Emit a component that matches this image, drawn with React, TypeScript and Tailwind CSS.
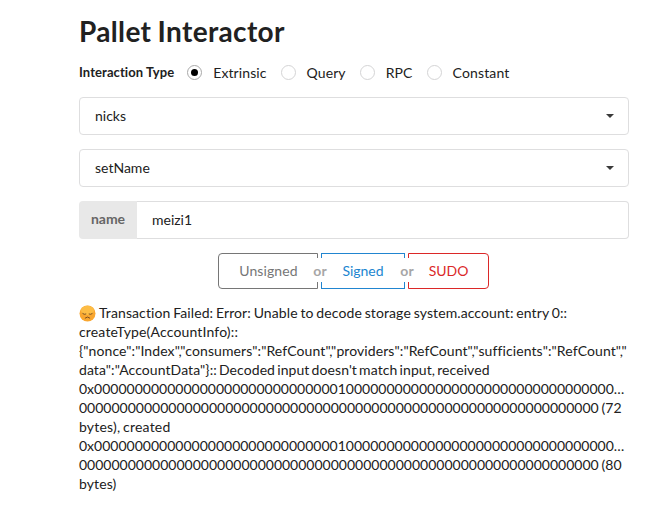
import React, { useState } from 'react';

const Z = (n: number) => '0'.repeat(n);

const MODES = [
  { label: 'Extrinsic', gap: 'mr-[14px]', tracking: 'tracking-[0.1px]' },
  { label: 'Query', gap: 'mr-[14px]', tracking: 'tracking-[0.1px]' },
  { label: 'RPC', gap: 'mr-[14px]', tracking: 'tracking-[0.1px]' },
  { label: 'Constant', gap: '', tracking: 'tracking-[0.15px]' },
];

type RadioProps = { label: string; gap: string; tracking: string; checked: boolean; onSelect: () => void };

function Radio({ label, gap, tracking, checked, onSelect }: RadioProps) {
  return (
    <button type="button" role="radio" aria-checked={checked} onClick={onSelect} className={`flex items-center ${gap}`}>
      <span
        className={`flex h-[15px] w-[15px] items-center justify-center rounded-full border ${
          checked ? 'border-[#a9a9a9]' : 'border-[#d4d4d5]'
        }`}
      >
        {checked && <span className="h-[7px] w-[7px] rounded-full bg-black" />}
      </span>
      <span className={`ml-[11px] ${tracking}`}>{label}</span>
    </button>
  );
}

function Dropdown({ value }: { value: string }) {
  return (
    <div className="mb-[14px] flex h-[38px] items-center justify-between rounded-[4px] border border-[#dededf] pr-[14px] pl-[15px]">
      <span className="pb-[2px]">{value}</span>
      <svg width="8" height="4" viewBox="0 0 8 4" className="block">
        <path d="M0 0H8L4 4Z" fill="#3a3a3a" />
      </svg>
    </div>
  );
}

function Or() {
  return (
    <div className="relative z-10 w-[3px]">
      <span className="absolute top-[5px] left-1/2 flex h-[24px] w-[24px] -translate-x-1/2 items-center justify-center bg-white pl-px font-bold text-[#a6a6a6]">
        or
      </span>
    </div>
  );
}

function Sad() {
  return (
    <svg viewBox="0 0 17 17" className="mr-[3px] inline-block h-[17px] w-[17px] align-[-4px]">
      <circle cx="8.5" cy="8.5" r="8" fill="#f9a62f" />
      <ellipse cx="8.5" cy="5.4" rx="6.5" ry="4.6" fill="#fdbd45" />
      <path d="M3.8 8.6Q5.2 9.9 6.9 9.1M10.1 9.1Q11.8 9.9 13.2 8.6" fill="none" stroke="#6d4520" strokeWidth="0.9" strokeLinecap="round" />
      <path d="M6.2 13Q8.5 10.8 10.8 13" fill="none" stroke="#6d4520" strokeWidth="0.9" strokeLinecap="round" />
    </svg>
  );
}

export default function App() {
  const [mode, setMode] = useState('Extrinsic');
  return (
    <main className="min-h-[526px] w-[658px] bg-white pt-[13px] pl-[79px] font-['Lato','Liberation_Sans',sans-serif] text-[14px] leading-[19px] text-[#212121]">
      <div className="w-[550px]">
        <h1 className="text-[28px] leading-[36px] font-bold tracking-[0.35px] [word-spacing:-0.9px]">Pallet Interactor</h1>
        <div className="mt-[13px] mb-[15px] flex h-[20px] items-center" role="radiogroup">
          <span className="mr-[13px] pt-px text-[13px] font-bold tracking-[0.08px]">Interaction Type</span>
          {MODES.map((m) => (
            <Radio key={m.label} {...m} checked={m.label === mode} onSelect={() => setMode(m.label)} />
          ))}
        </div>
        <Dropdown value="nicks" />
        <Dropdown value="setName" />
        <div className="flex h-[38px]">
          <div className="flex w-[58px] items-center justify-center rounded-l-[4px] bg-[#e8e8e8] pb-[3px] font-bold text-[#666]">name</div>
          <div className="flex flex-1 items-center rounded-r-[4px] border border-l-0 border-[#dededf] pb-px pl-[15px]">meizi1</div>
        </div>
        <div className="mt-[14px] ml-[139px] flex h-[36px]">
          <button className="w-[100px] rounded-l-[4px] border border-[#767676] pb-[2px] pl-px tracking-[0.1px] text-[#767676]">Unsigned</button>
          <Or />
          <button className="w-[84px] border border-[#2185d0] pb-[2px] text-[#2185d0]">Signed</button>
          <Or />
          <button className="w-[81px] rounded-r-[4px] border border-[#db2828] pb-[2px] text-[#db2828]">SUDO</button>
        </div>
        <div className="mt-[14px] whitespace-nowrap">
          <div className="h-[19px] tracking-[0.1px] [word-spacing:-0.9px]">
            <Sad />
            Transaction Failed: Error: Unable to decode storage system.account: entry 0::
          </div>
          <div className="tracking-[0.16px]">createType(AccountInfo)::</div>
          <div className="tracking-[0.09px]">{'{"nonce":"Index","consumers":"RefCount","providers":"RefCount","sufficients":"RefCount","'}</div>
          <div className="tracking-[0.08px] [word-spacing:-1.5px]">{'data":"AccountData"}:: Decoded input doesn\'t match input, received'}</div>
          <div>{`0x${Z(30)}1${Z(33)}…`}</div>
          <div className="[word-spacing:-0.7px]">{`${Z(64)} (72`}</div>
          <div className="tracking-[0.2px] [word-spacing:-1px]">bytes), created</div>
          <div>{`0x${Z(30)}1${Z(33)}…`}</div>
          <div className="[word-spacing:-0.7px]">{`${Z(64)} (80`}</div>
          <div className="tracking-[0.1px]">bytes)</div>
        </div>
      </div>
    </main>
  );
}
